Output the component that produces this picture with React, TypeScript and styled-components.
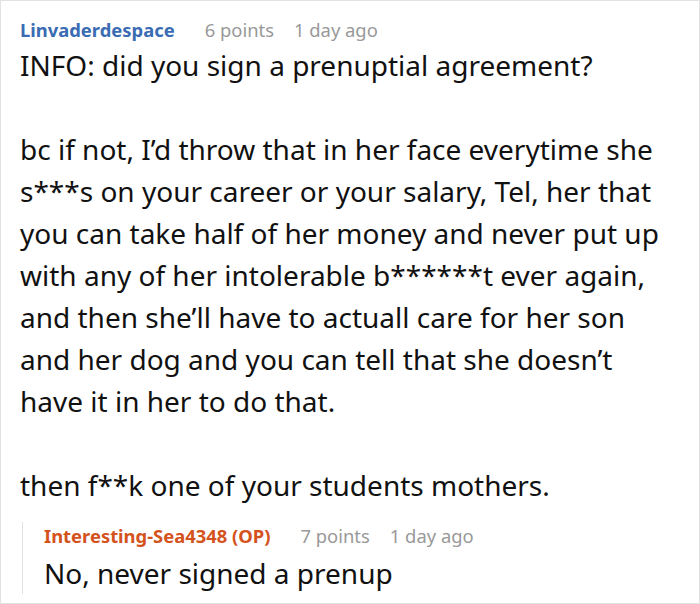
import React from "react";
import styled, { createGlobalStyle } from "styled-components";

const Global = createGlobalStyle`
  html, body { margin: 0; padding: 0; background: #fff; }
  body { font-family: "Noto Sans", "Open Sans", sans-serif; }
  * { box-sizing: border-box; }
`;

const Frame = styled.div`
  width: 700px;
  height: 604px;
  border: 1px solid #e2e2e2;
  padding: 15px 20px 0 19px;
  overflow: hidden;
`;

const Comment = styled.div`
  display: flex;
  flex-direction: column;
`;

const Header = styled.div`
  display: flex;
  align-items: baseline;
  gap: 20px;
  font-size: 18.4px;
  line-height: 28px;
`;

const Author = styled.span<{ $op?: boolean }>`
  font-weight: 700;
  color: ${(p) => (p.$op ? "#d4521c" : "#3a6cb4")};
  margin-right: 10px;
`;

const Meta = styled.span`
  color: #999;
`;

const Body = styled.div<{ $offset?: number }>`
  font-size: 28px;
  line-height: 42px;
  color: #111;
  margin-top: ${(p) => p.$offset ?? 0}px;
`;

const Para = styled.p`
  margin: 0 0 42px 0;
  &:last-child { margin-bottom: 0; }
`;

const Reply = styled.div`
  margin-top: 16px;
  margin-left: 2px;
  border-left: 1px solid #e0e0e0;
  padding-left: 21px;
`;

export default function App() {
  return (
    <>
      <Global />
      <Frame>
        <Comment>
          <Header>
            <Author>Linvaderdespace</Author>
            <Meta>6 points</Meta>
            <Meta>1 day ago</Meta>
          </Header>
          <Body>
            <Para>INFO: did you sign a prenuptial agreement?</Para>
            <Para>
              bc if not, I’d throw that in her face everytime she s***s on your career or your salary, Tel, her that you can take half of her money and never put up with any of her intolerable b******t ever again, and then she’ll have to actuall care for her son and her dog and you can tell that she doesn’t have it in her to do that.
            </Para>
            <Para>then f**k one of your students mothers.</Para>
          </Body>
          <Reply>
            <Header>
              <Author $op>Interesting-Sea4348 (OP)</Author>
              <Meta>7 points</Meta>
              <Meta>1 day ago</Meta>
            </Header>
            <Body $offset={2}>
              <Para>No, never signed a prenup</Para>
            </Body>
          </Reply>
        </Comment>
      </Frame>
    </>
  );
}
